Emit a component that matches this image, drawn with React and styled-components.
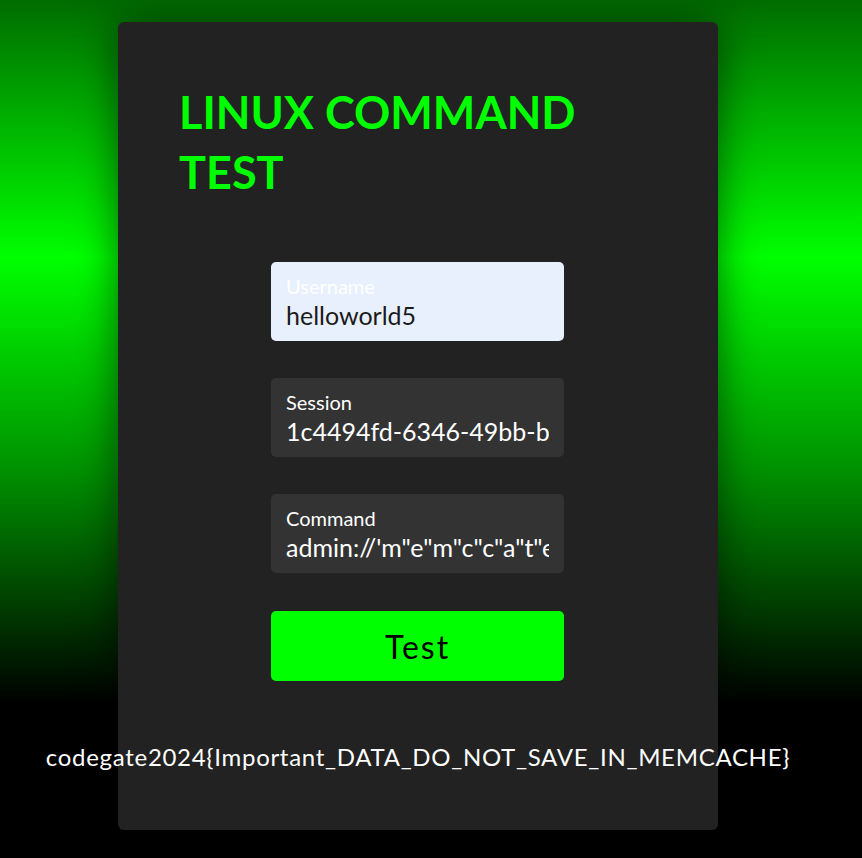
import React from "react";
import styled, { createGlobalStyle } from "styled-components";

const GlobalStyle = createGlobalStyle`
  html, body {
    margin: 0;
    padding: 0;
  }
  body {
    min-height: 858px;
    background: linear-gradient(
      to bottom,
      #006c00 0%,
      #00ff00 30%,
      #009000 55%,
      #000000 82%,
      #000000 100%
    );
    font-family: "Lato", "Noto Sans", sans-serif;
    overflow: hidden;
  }
`;

const Page = styled.div`
  padding: 22px 0 0 118px;
  height: 858px;
  box-sizing: border-box;
`;

const Card = styled.div`
  width: 600px;
  height: 808px;
  box-sizing: border-box;
  background: #222222;
  border-radius: 6px;
  box-shadow: 0 0 40px rgba(0, 0, 0, 0.55);
  padding: 60px 0 0 0;
  display: flex;
  flex-direction: column;
  align-items: center;
`;

const Title = styled.h1`
  align-self: stretch;
  margin: 0;
  padding: 0 60px 0 61px;
  font-family: "Lato", sans-serif;
  font-weight: 700;
  font-size: 45px;
  line-height: 60px;
  color: #00ff00;
`;

const Form = styled.form`
  align-self: flex-start;
  width: 293px;
  margin: 60px 0 0 153px;
  display: flex;
  flex-direction: column;
  gap: 37px;
`;

const Field = styled.div`
  height: 79px;
  box-sizing: border-box;
  border-radius: 5px;
  padding: 13px 15px 0;
  background: ${(p) => (p.$autofill ? "#e8f0fe" : "#333333")};
  display: flex;
  flex-direction: column;
`;

const Label = styled.label`
  font-size: 20px;
  line-height: 22px;
  color: #ffffff;
`;

const Input = styled.input`
  border: none;
  outline: none;
  background: transparent;
  padding: 0;
  margin-top: 3px;
  width: 100%;
  font-family: "Lato", sans-serif;
  font-size: 25px;
  line-height: 30px;
  color: ${(p) => (p.$autofill ? "#1b1b1b" : "#ffffff")};
`;

const Button = styled.button`
  height: 70px;
  margin-top: 1px;
  border: none;
  border-radius: 5px;
  background: #00ff00;
  color: #000000;
  font-family: "Lato", sans-serif;
  font-size: 32px;
  letter-spacing: 2px;
  cursor: pointer;
`;

const Flag = styled.p`
  margin: 61px 0 0;
  white-space: nowrap;
  font-size: 24px;
  letter-spacing: 0.7px;
  color: #ffffff;
`;

const fields = [
  { name: "Username", value: "helloworld5", autofill: true },
  { name: "Session", value: "1c4494fd-6346-49bb-b4c1-7f0e2d9a3b58" },
  { name: "Command", value: `admin://'m"e"m"c"c"a"t"e'` },
];

export default function App() {
  return (
    <>
      <GlobalStyle />
      <Page>
        <Card>
          <Title>
            LINUX COMMAND
            <br />
            TEST
          </Title>
          <Form onSubmit={(e) => e.preventDefault()}>
            {fields.map((f) => (
              <Field key={f.name} $autofill={f.autofill}>
                <Label>{f.name}</Label>
                <Input readOnly value={f.value} $autofill={f.autofill} />
              </Field>
            ))}
            <Button type="submit">Test</Button>
          </Form>
          <Flag>codegate2024{"{"}Important_DATA_DO_NOT_SAVE_IN_MEMCACHE{"}"}</Flag>
        </Card>
      </Page>
    </>
  );
}
